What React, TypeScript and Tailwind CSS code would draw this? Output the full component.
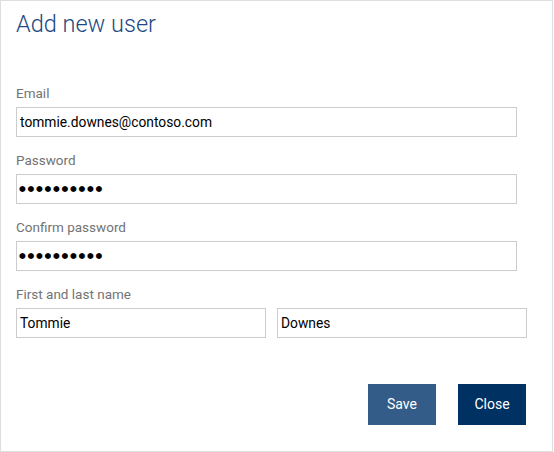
import React from 'react';

const font = { fontFamily: '"Segoe UI", Roboto, "Open Sans", sans-serif' };

interface FieldProps {
    label: string;
    children: React.ReactNode;
}

const Field: React.FC<FieldProps> = ({ label, children }) => (
    <div className="flex flex-col">
        <label className="text-[13.5px] leading-[20px] h-[20px] text-[#737373]">{label}</label>
        <div className="mt-[4px]">{children}</div>
    </div>
);

const TextBox: React.FC<{ value: string; width: string }> = ({ value, width }) => (
    <div className={`${width} h-[30px] border border-[#cccccc] bg-white flex items-center pl-[3px] text-[13.8px] text-black`}>
        {value}
    </div>
);

const PasswordBox: React.FC = () => (
    <div className="w-[501px] h-[30px] border border-[#cccccc] bg-white flex items-center pl-[2px]">
        <span className="text-[7.8px] leading-none tracking-[1.7px] text-black" style={{ fontFamily: '"DejaVu Sans", sans-serif' }}>
            ●●●●●●●●●●
        </span>
    </div>
);

export default function App() {
    return (
        <div className="w-[553px] h-[452px] border border-[#dedede] bg-white pl-[15px]" style={font}>
            <h1 className="mt-[8px] text-[23.5px] leading-[30px] font-light text-[#1d4a82]">Add new user</h1>
            <div className="mt-[44px] flex flex-col gap-[13px]">
                <Field label="Email">
                    <TextBox value="tommie.downes@contoso.com" width="w-[501px]" />
                </Field>
                <Field label="Password">
                    <PasswordBox />
                </Field>
                <Field label="Confirm password">
                    <PasswordBox />
                </Field>
                <Field label="First and last name">
                    <div className="flex gap-[11px]">
                        <TextBox value="Tommie" width="w-[250px]" />
                        <TextBox value="Downes" width="w-[250px]" />
                    </div>
                </Field>
            </div>
            <div className="mt-[46px] flex justify-end gap-[22px] pr-[26px]">
                <button className="w-[68px] h-[41px] bg-[#335c88] text-white text-[14px]">Save</button>
                <button className="w-[68px] h-[41px] bg-[#003163] text-white text-[14px]">Close</button>
            </div>
        </div>
    );
}
